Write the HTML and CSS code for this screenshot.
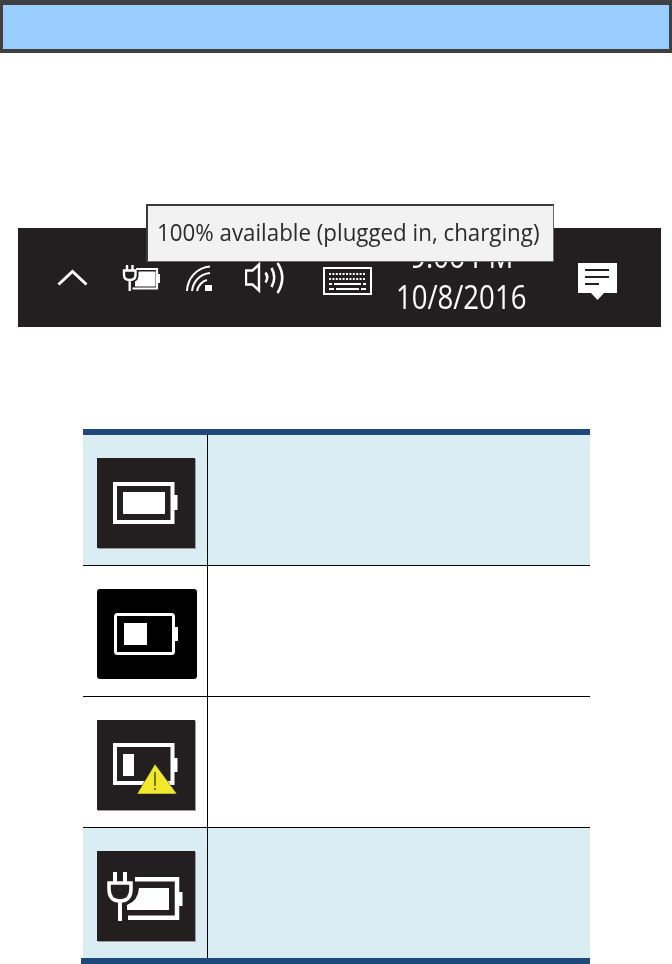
FILE: index.html
```html
<!DOCTYPE html>
<html lang="en">
<head>
<meta charset="utf-8">
<title>Battery status icons</title>
<link rel="stylesheet" href="styles.css">
</head>
<body>
<header class="band"><div class="band-fill"></div></header>

<section class="taskbar">
  <div class="tooltip"><span class="tooltip-text">100% available (plugged in, charging)</span></div>
  <svg class="tray tray-chevron" viewBox="0 0 31 40"><path d="M1.500 24.500 15.500 11.500 29.500 24.500" fill="none" stroke="#fff" stroke-width="3"/></svg>
  <svg class="tray tray-power" viewBox="0 0 38 40">
    <path d="M5 5V10.500M10.500 5V10.500" stroke="#fff" stroke-width="2.400" fill="none"/>
    <path d="M2 10.500H13.500V15Q13.500 20 7.700 20Q2 20 2 15Z M7.700 20V31" stroke="#fff" stroke-width="2.400" fill="none"/>
    <path d="M14 9H35V28.500H10.500" stroke="#fff" stroke-width="2.200" fill="none"/>
    <path d="M16.500 11.500H33.500V26.500H13V21.500Q16.500 20 16.500 15Z" fill="#fff"/>
    <rect x="35.500" y="14" width="2.500" height="9" fill="#fff"/>
  </svg>
  <svg class="tray tray-wifi" viewBox="0 0 26 40">
    <g fill="none" stroke="#fff" stroke-width="2"><path d="M1 31C1.500 18 11 7.500 24 6.500"/><path d="M6 31C7 22 13.500 14 24 13"/><path d="M11 31C12 26 16 21 21 20"/></g>
    <rect x="19" y="25" width="7" height="6" fill="#fff"/>
  </svg>
  <svg class="tray tray-speaker" viewBox="0 0 39 40">
    <path d="M1 10.500H7.500L14 4.500V30.500L7.500 24.500H1Z" fill="none" stroke="#fff" stroke-width="2.400"/>
    <g fill="none" stroke="#fff" stroke-width="2.600"><path d="M20.500 12.500Q24 17.500 20.500 22.500"/><path d="M26.500 8Q32 17.500 26.500 27"/><path d="M32.500 3Q42 17.500 32.500 33"/></g>
  </svg>
  <svg class="tray tray-keyboard" viewBox="0 0 49 40">
    <rect x="1" y="8" width="47" height="26" fill="none" stroke="#fff" stroke-width="2"/>
    <path d="M6 14H43M6 19H43" stroke="#fff" stroke-width="2" stroke-dasharray="2 1.400" fill="none"/>
    <path d="M6 24H9M11 24H38M40 24H43M6 29H11M13 29H36M38 29H43" stroke="#fff" stroke-width="2" fill="none"/>
  </svg>
  <div class="clock">
    <div class="clock-line"><span class="clock-text">9:06 PM</span></div>
    <div class="clock-line"><span class="clock-text">10/8/2016</span></div>
  </div>
  <svg class="tray tray-note" viewBox="0 0 39 40">
    <path d="M0 3H39V33H26L19.500 40L13 33H0Z" fill="#fff"/>
    <path d="M7 10H31M7 17H31M7 24H21" stroke="#231f20" stroke-width="1.800" fill="none"/>
  </svg>
</section>

<section class="status-table">
  <div class="rule rule-top"></div>
  <div class="row row-tint">
    <div class="cell-icon">
      <svg class="icon icon-soft" viewBox="0 0 98 90">
        <rect x="18" y="26" width="57.500" height="38" fill="none" stroke="#fff" stroke-width="4"/>
        <rect x="77" y="37" width="3.500" height="15" fill="#fff"/>
        <rect x="26" y="34" width="42" height="22" fill="#fff"/>
      </svg>
    </div>
    <div class="cell-text"></div>
  </div>
  <div class="row">
    <div class="cell-icon">
      <svg class="icon icon-black" viewBox="0 0 100 90">
        <rect x="18.500" y="25.500" width="58" height="39" rx="2" fill="none" stroke="#fff" stroke-width="3"/>
        <rect x="78" y="38" width="3" height="14" fill="#fff"/>
        <rect x="27" y="34" width="23" height="22" fill="#fff"/>
      </svg>
    </div>
    <div class="cell-text"></div>
  </div>
  <div class="row">
    <div class="cell-icon">
      <svg class="icon icon-soft" viewBox="0 0 98 90">
        <rect x="18" y="25" width="57.500" height="38" fill="none" stroke="#fff" stroke-width="4"/>
        <rect x="77" y="38" width="3.500" height="14" fill="#fff"/>
        <rect x="26" y="34" width="11" height="22" fill="#fff"/>
        <path d="M58 44 80 74H40Z" fill="#f0e82a" stroke="#231f20" stroke-width="0.500"/>
        <path d="M58 52V66M58 68V70" stroke="#3a3a20" stroke-width="1.300" fill="none"/>
      </svg>
    </div>
    <div class="cell-text"></div>
  </div>
  <div class="row row-tint row-last">
    <div class="cell-icon">
      <svg class="icon icon-soft" viewBox="0 0 98 90">
        <path d="M18 21V31M28 21V31" stroke="#fff" stroke-width="4" fill="none"/>
        <path d="M12 32H34V38Q34 50 23 50Q12 50 12 38Z" stroke="#fff" stroke-width="3.500" fill="none"/>
        <path d="M23 50V70" stroke="#fff" stroke-width="4" fill="none"/>
        <path d="M38 28.200H80V66.800H31" stroke="#fff" stroke-width="4.500" fill="none"/>
        <rect x="82" y="41" width="3.500" height="14" fill="#fff"/>
        <path d="M42 37H72V59H30V54Q41 50 42 37Z" fill="#fff"/>
      </svg>
    </div>
    <div class="cell-text"></div>
  </div>
  <div class="rule rule-bottom"></div>
</section>
</body>
</html>
```
FILE: styles.css
```css
html, body {
  margin: 0;
  padding: 0;
  background: #fff;
}

body {
  height: 964px;
  overflow: hidden;
  font-family: "Open Sans", "Noto Sans", sans-serif;
}

.band {
  height: 53px;
  box-sizing: border-box;
  padding: 5px 3px 4px;
  background: #404040;
}

.band-fill {
  height: 100%;
  background: #99ccff;
}

.taskbar {
  position: relative;
  box-sizing: border-box;
  width: 643px;
  height: 99px;
  margin: 175px 0 0 18px;
  padding: 32px 0 0 39px;
  background: #231f20;
  display: grid;
  grid-template-columns: 65px 64px 59px 78px 74px 181px 39px;
  align-items: start;
}

.tooltip {
  position: absolute;
  left: 128px;
  top: -24px;
  box-sizing: border-box;
  width: 408px;
  height: 58px;
  padding-left: 9px;
  border-style: solid;
  border-width: 2px 1px 1px 2px;
  border-color: #3a3a3a #6a6a6a #6a6a6a #3a3a3a;
  background: #f2f2f2;
  color: #2b2b2b;
  font-size: 24px;
  line-height: 52px;
  white-space: nowrap;
  z-index: 2;
}

.tooltip-text {
  display: inline-block;
  transform: scaleX(0.93);
  transform-origin: left center;
}

.tray {
  display: block;
  height: 40px;
}

.tray-chevron { width: 31px; }
.tray-power { width: 38px; }
.tray-wifi { width: 26px; }
.tray-speaker { width: 39px; }
.tray-keyboard { width: 49px; }
.tray-note { width: 39px; }

.clock {
  width: 129px;
  margin-top: -25px;
  color: #fff;
  font-size: 33px;
  font-weight: 400;
  line-height: 41px;
  white-space: nowrap;
}

.clock-line {
  display: flex;
  justify-content: center;
}

.clock-text {
  flex: none;
  transform: scaleX(0.835);
}

.status-table {
  margin: 102px 0 0 83px;
  width: 507px;
}

.rule {
  height: 6px;
  background: #1f497d;
}

.rule-bottom {
  margin-left: -2px;
}

.row {
  display: grid;
  grid-template-columns: 125px 1fr;
  height: 131px;
  box-sizing: border-box;
  border-bottom: 1px solid #000;
}

.row-tint {
  background: #daedf3;
}

.row-last {
  height: 130px;
  border-bottom: 0;
}

.cell-icon {
  box-sizing: border-box;
  padding: 23px 0 0 14px;
  border-right: 1px solid #000;
}

.icon {
  display: block;
  height: 90px;
  filter: blur(0.4px);
}

.icon-soft {
  width: 98px;
  background: #231f20;
  box-shadow: 1px 1px 0 #9a9a9a;
}

.icon-black {
  width: 100px;
  background: #000;
  border-radius: 3px;
  filter: none;
}
```
